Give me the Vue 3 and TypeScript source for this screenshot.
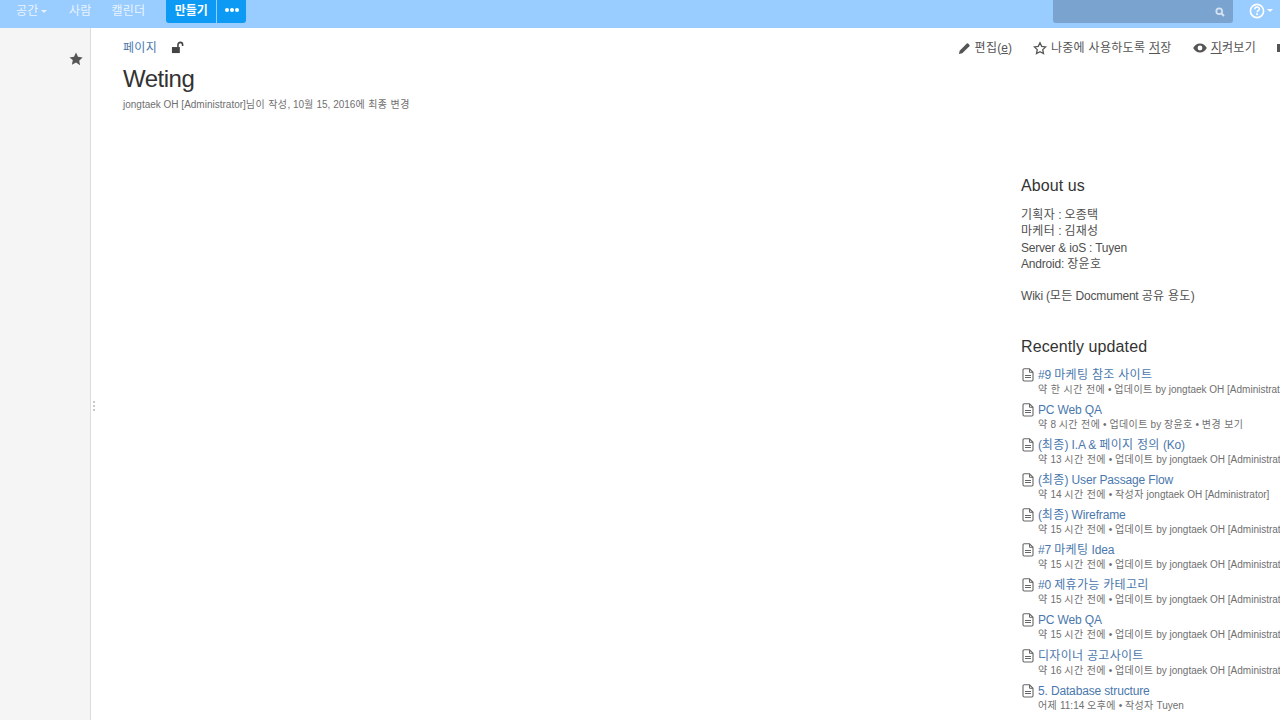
<script setup lang="ts">
interface Row { title: string; meta: string }
interface Seg { text: string; ko: boolean }

const team: string[] = ['기획자 : 오종택', '마케터 : 김재성', 'Server & ioS : Tuyen', 'Android: 장윤호']
const admin = 'jongtaek OH [Administrator]'
const rows: Row[] = [
  { title: '#9 마케팅 참조 사이트', meta: `약 한 시간 전에 • 업데이트 by ${admin} • 변경 보기` },
  { title: 'PC Web QA', meta: '약 8 시간 전에 • 업데이트 by 장윤호 • 변경 보기' },
  { title: '(최종) I.A & 페이지 정의 (Ko)', meta: `약 13 시간 전에 • 업데이트 by ${admin} • 변경 보기` },
  { title: '(최종) User Passage Flow', meta: `약 14 시간 전에 • 작성자 ${admin}` },
  { title: '(최종) Wireframe', meta: `약 15 시간 전에 • 업데이트 by ${admin} • 변경 보기` },
  { title: '#7 마케팅 Idea', meta: `약 15 시간 전에 • 업데이트 by ${admin} • 변경 보기` },
  { title: '#0 제휴가능 카테고리', meta: `약 15 시간 전에 • 업데이트 by ${admin} • 변경 보기` },
  { title: 'PC Web QA', meta: `약 15 시간 전에 • 업데이트 by ${admin} • 변경 보기` },
  { title: '디자이너 공고사이트', meta: `약 16 시간 전에 • 업데이트 by ${admin} • 변경 보기` },
  { title: '5. Database structure', meta: '어제 11:14 오후에 • 작성자 Tuyen' },
]
const byline = 'jongtaek OH [Administrator]님이 작성, 10월 15, 2016에 최종 변경'

function seg(text: string): Seg[] {
  return (text.match(/[\uAC00-\uD7A3]+(?: [\uAC00-\uD7A3]+)*|[^\uAC00-\uD7A3]+/g) ?? []).map((t) => ({
    text: t,
    ko: /[\uAC00-\uD7A3]/.test(t),
  }))
}
</script>

<template>
  <div class="page">
    <header class="top">
      <nav class="nav">
        <a class="nav-item first">공간<span class="caret"></span></a>
        <a class="nav-item second">사람</a>
        <a class="nav-item third">캘린더</a>
        <div class="create">
          <span class="create-main">만들기</span>
          <span class="create-more"><i></i><i></i><i></i></span>
        </div>
      </nav>
      <div class="top-right">
        <div class="search">
          <svg width="10" height="10" viewBox="0 0 10 10"><circle cx="4.2" cy="4.2" r="2.9" fill="none" stroke="#d5e3f2" stroke-width="1.7"/><path d="M6.3 6.3 9 9" stroke="#d5e3f2" stroke-width="2"/></svg>
        </div>
        <div class="help">
          <svg width="16" height="16" viewBox="0 0 16 16"><circle cx="8" cy="8" r="6.6" fill="none" stroke="#fff" stroke-width="1.6"/><path d="M5.8 6.3c0-3 4.500-3 4.500-.3 0 1.700-2.200 1.600-2.200 3.300" fill="none" stroke="#fff" stroke-width="1.500"/><rect x="7.200" y="10.300" width="1.800" height="1.800" fill="#fff"/></svg>
          <span class="caret"></span>
        </div>
      </div>
    </header>

    <div class="body">
      <aside class="side">
        <svg class="side-star" width="14" height="14" viewBox="0 0 24 24"><path fill="#555" d="M12 1l3.400 7.300 7.900 1-5.800 5.500 1.500 7.900L12 17.800l-7 3.900 1.500-7.900L.7 9.300l7.900-1z"/></svg>
        <div class="grip"><i></i><i></i><i></i></div>
      </aside>

      <main class="main">
        <div class="toolbar">
          <div class="crumbs">
            <a class="crumb ko">페이지</a>
            <svg width="13" height="13" viewBox="0 0 14 14"><path fill="#444" d="M1 6.500h8.500V13H1z"/><path fill="none" stroke="#444" stroke-width="1.700" d="M7.500 6.500V4a2.500 2.500 0 0 1 5 0v1.500"/></svg>
          </div>
          <div class="actions">
            <span class="action a-edit">
              <svg width="13" height="13" viewBox="0 0 14 14"><path fill="#555" d="M1 13l.8-3.600L9.500 1.700a1 1 0 0 1 1.400 0l1.400 1.400a1 1 0 0 1 0 1.400L4.600 12.200z"/></svg>
              <span><span class="ko">편집</span>(<u>e</u>)</span>
            </span>
            <span class="action a-save">
              <svg width="14" height="14" viewBox="0 0 24 24"><path fill="none" stroke="#555" stroke-width="2.200" d="M12 3l2.900 6.200 6.700.9-4.900 4.700 1.300 6.700-6-3.300-6 3.300 1.300-6.700-4.900-4.700 6.700-.9z"/></svg>
              <span class="ko">나중에 사용하도록 <u>저</u>장</span>
            </span>
            <span class="action a-watch">
              <svg width="14" height="10" viewBox="0 0 14 10"><path fill="#555" fill-rule="evenodd" d="M7 .5c3 0 5.500 2 6.800 4.500C12.500 7.500 10 9.500 7 9.500S1.500 7.500.2 5C1.500 2.500 4 .5 7 .5zM7 2.600a2.400 2.400 0 1 0 0 4.800 2.400 2.400 0 0 0 0-4.800z"/></svg>
              <span class="ko"><u>지</u>켜보기</span>
            </span>
            <span class="clipped"></span>
          </div>
        </div>

        <h1 class="title">Weting</h1>
        <p class="byline small"><span v-for="(s, i) in seg(byline)" :key="i" :class="s.ko ? 'ko' : 'la'">{{ s.text }}</span></p>

        <section class="panel">
          <h2 class="about-head">About us</h2>
          <p v-for="line in team" :key="line" class="line"><span v-for="(s, i) in seg(line)" :key="i" :class="s.ko ? 'ko' : 'la'">{{ s.text }}</span></p>
          <p class="line wiki"><span v-for="(s, i) in seg('Wiki (모든 Docmument 공유 용도)')" :key="i" :class="s.ko ? 'ko' : 'la'">{{ s.text }}</span></p>

          <h2 class="recent-head">Recently updated</h2>
          <ul class="list">
            <li v-for="(r, n) in rows" :key="n" class="row">
              <svg class="doc" width="12" height="14" viewBox="0 0 12 14"><path fill="none" stroke="#666" stroke-width="1.100" d="M1 2a1.200 1.200 0 0 1 1.200-1.200h5.300L11 4.300v7.500A1.200 1.200 0 0 1 9.800 13H2.200A1.200 1.200 0 0 1 1 11.800z"/><path fill="none" stroke="#666" d="M7.500 1v3.300H11M3 7.500h6M3 9.500h6"/></svg>
              <div class="row-text">
                <a class="row-title"><span v-for="(s, i) in seg(r.title)" :key="i" :class="s.ko ? 'ko' : 'la'">{{ s.text }}</span></a>
                <div class="row-meta small"><span v-for="(s, i) in seg(r.meta)" :key="i" :class="s.ko ? 'ko' : 'la'">{{ s.text }}</span></div>
              </div>
            </li>
          </ul>
        </section>
      </main>
    </div>
  </div>
</template>

<style>
html, body { margin: 0; overflow: hidden; background: #fff; }
</style>

<style scoped>
.page {
  width: 1280px;
  height: 720px;
  overflow: hidden;
  display: flex;
  flex-direction: column;
  font-family: "Liberation Sans", "Noto Sans CJK KR", sans-serif;
  font-size: 12px;
  color: #333;
}
.ko { letter-spacing: 0.3px; }
.la { letter-spacing: -0.2px; }
.small .ko { letter-spacing: 0.4px; }
.small .la { letter-spacing: 0; }
.top {
  flex: 0 0 28px;
  background: #99ccff;
  display: flex;
  justify-content: space-between;
}
.nav { display: flex; align-items: flex-start; padding-left: 16px; }
.nav-item { color: #eaf4ff; font-size: 12px; line-height: 21px; padding-top: 1px; white-space: nowrap; letter-spacing: 0.2px; }
.second { margin-left: 19px; }
.third { margin-left: 20px; }
.first { width: 34px; }
.caret {
  display: inline-block;
  margin-left: 3px;
  vertical-align: 2px;
  border-left: 3px solid transparent;
  border-right: 3px solid transparent;
  border-top: 3px solid #eaf4ff;
}
.create {
  display: flex;
  margin-left: 21px;
  height: 23px;
  color: #fff;
  font-weight: 700;
}
.create-main {
  width: 50px;
  text-align: center;
  line-height: 22px;
  background: #0c9af5;
  border-radius: 0 0 0 3px;
  margin-right: 1px;
}
.create-more {
  width: 29px;
  box-sizing: border-box;
  padding-bottom: 3px;
  background: #0c9af5;
  border-radius: 0 0 3px 0;
  display: flex;
  align-items: center;
  justify-content: center;
  gap: 1px;
}
.create-more i { width: 4px; height: 4px; border-radius: 50%; background: #fff; }
.top-right { display: flex; align-items: flex-start; }
.search {
  width: 180px;
  height: 23px;
  box-sizing: border-box;
  background: #7ba3cf;
  border-radius: 0 0 3px 3px;
  display: flex;
  align-items: center;
  justify-content: flex-end;
  padding: 0 8px 0 0;
}
.help {
  width: 47px;
  height: 21px;
  box-sizing: border-box;
  padding-left: 16px;
  display: flex;
  align-items: center;
}
.help .caret { border-top-color: #fff; margin-left: 2px; }
.body { flex: 1; display: flex; min-height: 0; }
.side {
  position: relative;
  flex: 0 0 90px;
  background: #f5f5f5;
  border-right: 1px solid #dcdcdc;
  display: flex;
  justify-content: flex-end;
}
.side-star { margin: 24px 7px 0 0; }
.grip {
  position: absolute;
  left: 93px;
  top: 373px;
  display: flex;
  flex-direction: column;
  gap: 2px;
}
.grip i { width: 2px; height: 2px; background: #c9c9c9; }
.main { flex: 1; min-width: 0; padding: 0 0 0 32px; overflow: hidden; }
.toolbar { display: flex; justify-content: space-between; height: 37px; padding-top: 12px; box-sizing: border-box; }
.crumbs { display: flex; align-items: flex-start; gap: 14px; }
.crumb { color: #4a78ad; line-height: 16px; }
.crumbs svg { margin-top: 1px; }
.actions { display: flex; align-items: flex-start; color: #555; line-height: 16px; white-space: nowrap; }
.action { display: flex; align-items: center; gap: 4px; height: 16px; }
.a-save { margin-left: 21px; }
.a-watch { margin-left: 21px; }
.clipped { width: 3px; height: 8px; margin: 4px 0 0 21px; background: #555; }
.title {
  margin: 0;
  font-size: 24px;
  font-weight: 400;
  line-height: 28px;
  letter-spacing: -0.5px;
  color: #333;
}
.byline { margin: 5px 0 0; font-size: 10px; line-height: 13px; color: #707070; white-space: nowrap; }
.panel { margin: 65px 0 0 898px; width: 320px; }
.about-head, .recent-head { margin: 0; font-size: 16px; font-weight: 400; line-height: 20px; letter-spacing: 0.1px; color: #333; }
.about-head { margin-bottom: 11px; }
.line { margin: 0; line-height: 16.300px; color: #4f4f4f; white-space: nowrap; }
.wiki { margin-top: 16.300px; }
.recent-head { margin-top: 32px; margin-bottom: 10px; }
.list { list-style: none; margin: 0; padding: 0; }
.row { display: flex; gap: 4px; height: 35.100px; white-space: nowrap; }
.doc { margin: 1px 0 0 1px; flex: none; }
.row-title { display: block; color: #4a78ad; line-height: 16px; font-size: 12px; }
.row-title .la { letter-spacing: -0.15px; }
.row-meta { font-size: 10px; line-height: 13px; color: #707070; }
</style>
